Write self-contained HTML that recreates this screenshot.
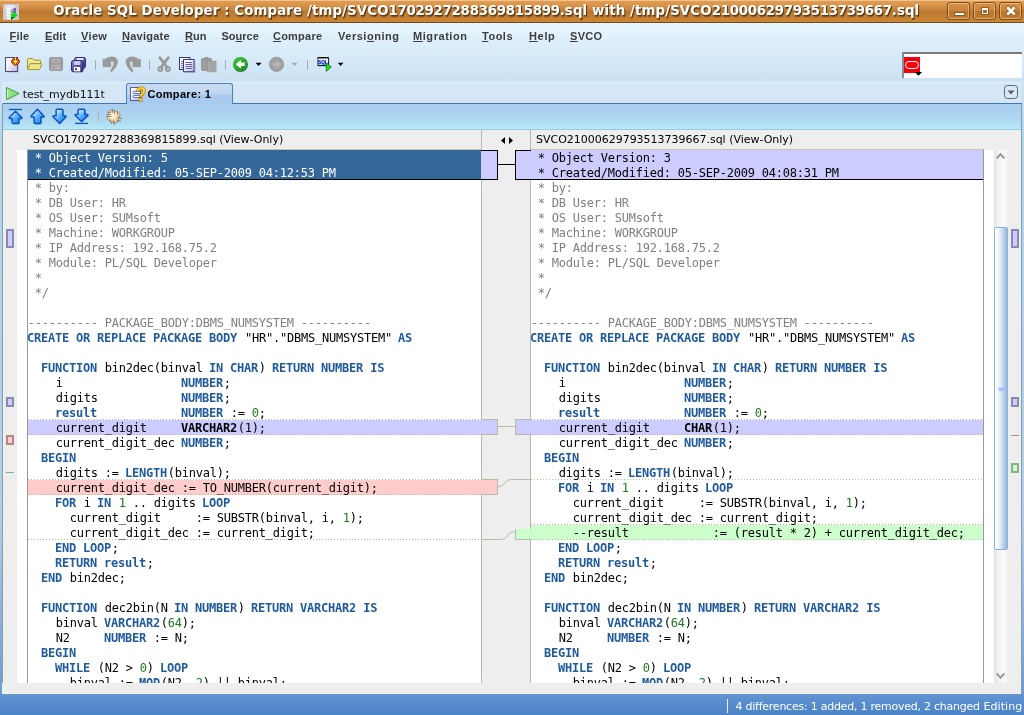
<!DOCTYPE html>
<html lang="en"><head><meta charset="utf-8"><title>Oracle SQL Developer : Compare</title>
<style>
html,body{margin:0;padding:0}
body{width:1024px;height:715px;overflow:hidden;position:relative;
 font:11px "DejaVu Sans","Liberation Sans",sans-serif;color:#000;
 background:linear-gradient(to bottom,#E7F5FD 23px,#CBE2F4 81px,#C6DFF3 103px,#ADD8F2 130px,#AAD0EE 520px,#699BD5 693px,#6295D1 694px,#4B83C7 715px)}
div,span,svg{position:absolute;box-sizing:border-box}
b,i,#ttext span{position:static}
#ttext span{letter-spacing:-0.27px}
/* ---------- title bar ---------- */
#title{left:0;top:0;width:1024px;height:23px;
 background:linear-gradient(to bottom,#F1C291 0,#F1C291 1px,#E39D50 1px,#DA944B 5px,#C6823B 10px,#B97832 11.5px,#BB7A31 13px,#CC8634 21.5px,#A86C2C 22px,#6E4A24 22px,#6E4A24 23px)}
#ttext{left:53.2px;top:2px;height:18px;line-height:18px;white-space:nowrap;
 font:bold 13.33px/18px "DejaVu Sans","Liberation Sans",sans-serif;color:#fff;letter-spacing:0.12px;
 text-shadow:1px 1px 0 #5a3a14,1px 2px 1px rgba(70,40,10,.6)}
.wb{top:2px;width:23px;height:18px;border:1px solid #7d4f1d;border-radius:3px;
 background:linear-gradient(to bottom,#D8914A 0,#C98239 50%,#B5752F 50%,#C27D2F 100%);
 box-shadow:inset 0 0 0 1px rgba(255,214,160,.55)}
/* ---------- menu ---------- */
.m{top:29px;height:14px;line-height:14px;white-space:nowrap;font:bold 11px/14px "Liberation Sans",sans-serif;color:#3c3c3c}
.m u{text-decoration:underline;text-underline-offset:1px}
/* ---------- tabs ---------- */
#strip{left:2px;top:82px;width:1020px;height:22px;border-radius:3px 3px 0 0;background:#D5E7F5;
 border-top:1px solid #E3F0FA;border-left:1px solid #E0EEF9;border-bottom:1px solid #3F74C6}
#atab{left:126px;top:83px;width:107px;height:21px;border:1px solid #4A7FCB;border-bottom:none;border-radius:3px 3px 0 0;
 background:linear-gradient(to bottom,#CADCF3 0,#BFD5F1 10px,#AACAEE 11px,#A7CAEE 21px)}
#ctool{left:2px;top:104px;width:1020px;height:26px;border-left:1px solid #8E9CAA;border-right:1px solid #8E9CAA;
 background:linear-gradient(to bottom,#AACEF0 0,#ADD5F0 13px,#B0DDF2 19px,#B6EAF7 25px,#9DC7E6 25px,#9DC7E6 26px)}
.t11{font:11px/14px "DejaVu Sans",sans-serif;white-space:nowrap;height:14px;letter-spacing:-0.015px}
/* ---------- main ---------- */
#main{left:2px;top:130px;width:1020px;height:564px;background:#EEEEEE;border-left:1px solid #999;border-right:1px solid #999}
.ed{top:150px;height:533px;background:#fff;overflow:hidden;
 font:12px/15px "DejaVu Sans Mono","Liberation Mono",monospace;letter-spacing:-0.224px;color:#000}
.ln{position:relative;left:-0.25px;top:1px;height:15px;white-space:pre}
.ln b{color:#1F5A9C;position:relative;left:-0.8px}
.ln i{color:#1E7A1E;font-style:normal}
.ln.c{color:#808080}
.ln.d b{color:#000}
.ln.s{color:#fff}
.band{left:0;width:100%;height:16px;background-repeat:repeat-x,repeat-x,no-repeat;background-size:3px 1px,3px 1px,100% 15px;background-position:0 0,0 15px,0 1px;
 background-image:linear-gradient(to right,#B9B9A4 1px,transparent 1px),linear-gradient(to right,#B9B9A4 1px,transparent 1px),linear-gradient(var(--c),var(--c))}
.dot{left:0;width:100%;height:1px;background:linear-gradient(to right,#B9B9A4 1px,transparent 1px) 0 0/3px 1px repeat-x}
.vl{width:1px;background:#B9B9A7}
.mk{width:8px;border:2px solid}
/* ---------- status ---------- */
#status{left:0;top:694px;width:1024px;height:21px;color:#fff}
</style></head>
<body>
<div id="all" style="left:0;top:0;width:1024px;height:715px;will-change:transform">

<!-- ======= title bar ======= -->
<div id="title">
 <svg style="left:3px;top:4px" width="16" height="16" viewBox="0 0 16 16">
  <defs><linearGradient id="gpur" x1="0" y1="0" x2="1" y2="0"><stop offset="0" stop-color="#D8D4EC"/><stop offset="1" stop-color="#4A4890"/></linearGradient>
  <linearGradient id="gcyl" x1="0" y1="0" x2="1" y2="0"><stop offset="0" stop-color="#D4D4D8"/><stop offset=".3" stop-color="#FFFFFF"/><stop offset=".75" stop-color="#E6E4F0"/><stop offset="1" stop-color="#CFCFD6"/></linearGradient></defs>
  <rect width="16" height="16" fill="#C8CACE"/>
  <path d="M1.8 2.4 C1.8 .6 12.6 .6 12.6 2.4 L11.2 14 C11 15.8 3.6 15.8 3.4 14Z" fill="url(#gcyl)"/>
  <ellipse cx="7.2" cy="2.5" rx="5.2" ry="1.5" fill="#E6E4F2"/>
  <path d="M7.6 5.2 L12.9 3.8 L12.7 9.4 L7.6 8.6Z" fill="url(#gpur)"/>
  <path d="M2.6 5.6 C4.4 7.2 7.4 7.2 8.4 6.6 M3 9 C4.6 10.6 7.4 10.6 8.4 10 M3.3 12.2 C4.8 13.6 7.4 13.6 8.4 13" stroke="#D2D2D8" stroke-width=".9" fill="none"/>
  <path d="M8 6.8 L14.8 11.3 L8 16Z" fill="#10D418"/>
  <path d="M8.6 8.2 L10.4 9.4 L8.6 10.4Z" fill="#B8FFB8"/>
  <path d="M8 13.4 L8 16 L12.2 13.1Z" fill="#0A5C24"/>
 </svg>
 <div id="ttext">Oracle SQL Developer : Compare /tmp/SVCO<span>1702927288369815899</span>.sql with /tmp/SVCO<span>21000629793513739667</span>.sql</div>
 <div class="wb" style="left:947px"><div style="left:6.6px;top:9.7px;width:9px;height:2.8px;background:#fff;box-shadow:0 0 0 1px rgba(110,70,25,.6)"></div></div>
 <div class="wb" style="left:973px"><div style="left:7.6px;top:4.8px;width:6.8px;height:6.6px;border:1.5px solid #fff;border-top-width:2.2px;box-shadow:0 0 0 1px rgba(110,70,25,.6);background:#A86A28"></div></div>
 <div class="wb" style="left:999px">
  <svg style="left:5px;top:2px" width="13" height="13" viewBox="0 0 13 13"><path d="M3.1 3.1 L8.9 8.7 M8.9 3.1 L3.1 8.7" stroke="#7a4d1c" stroke-width="4.4" stroke-linecap="square" opacity=".6"/><path d="M3.1 3.1 L8.9 8.7 M8.9 3.1 L3.1 8.7" stroke="#fff" stroke-width="2.6" stroke-linecap="square"/></svg>
 </div>
</div>

<!-- ======= menu bar ======= -->
<div class="m" style="left:9.5px;letter-spacing:0.2px"><u>F</u>ile</div>
<div class="m" style="left:45px;letter-spacing:0.1px"><u>E</u>dit</div>
<div class="m" style="left:81px;letter-spacing:0.35px"><u>V</u>iew</div>
<div class="m" style="left:122px;letter-spacing:0.25px"><u>N</u>avigate</div>
<div class="m" style="left:185px;letter-spacing:0.05px"><u>R</u>un</div>
<div class="m" style="left:221.5px;letter-spacing:0.0px">So<u>u</u>rce</div>
<div class="m" style="left:273px;letter-spacing:0.22px"><u>C</u>ompare</div>
<div class="m" style="left:338px;letter-spacing:0.52px">Versi<u>o</u>ning</div>
<div class="m" style="left:413px;letter-spacing:0.56px"><u>M</u>igration</div>
<div class="m" style="left:482px;letter-spacing:0.5px"><u>T</u>ools</div>
<div class="m" style="left:529px;letter-spacing:0.65px"><u>H</u>elp</div>
<div class="m" style="left:570px;letter-spacing:0.3px"><u>S</u>VCO</div>

<!-- ======= main toolbar ======= -->
<svg style="left:0;top:50px" width="360" height="30" viewBox="0 50 360 30">
 <defs>
  <linearGradient id="gdoc" x1="0" y1="0" x2="1" y2="1"><stop offset="0" stop-color="#fff"/><stop offset=".4" stop-color="#F2F0FA"/><stop offset="1" stop-color="#BCB8DE"/></linearGradient>
  <linearGradient id="gflp" x1="0" y1="0" x2="1" y2="1"><stop offset="0" stop-color="#8A8AD8"/><stop offset=".5" stop-color="#5856A6"/><stop offset="1" stop-color="#36347E"/></linearGradient>
  <radialGradient id="ggrn" cx=".42" cy=".38" r=".62"><stop offset="0" stop-color="#34C434"/><stop offset=".7" stop-color="#1CA41C"/><stop offset=".86" stop-color="#0E840E"/><stop offset="1" stop-color="#086408"/></radialGradient>
  <linearGradient id="gsql" x1="0" y1="0" x2="0" y2="1"><stop offset="0" stop-color="#fff"/><stop offset=".55" stop-color="#E6FFFF"/><stop offset="1" stop-color="#6EEAEA"/></linearGradient>
 </defs>
 <!-- new -->
 <rect x="6.5" y="58.5" width="12" height="14" fill="#8A96A8" opacity=".55"/>
 <rect x="5.5" y="57.5" width="12" height="14" fill="url(#gdoc)" stroke="#4A4888" stroke-width="1"/>
 <path d="M15.5 56.9 L17.6 58.2 L19 59.4 L20.1 61.5 L19 63.6 L17.6 64.8 L15.5 66.1 L13.4 64.8 L12 63.6 L10.9 61.5 L12 59.4 L13.4 58.2Z" fill="#A92A04"/>
 <path d="M15.5 57.6 L16.3 60.7 L19.4 61.5 L16.3 62.3 L15.5 65.4 L14.7 62.3 L11.6 61.5 L14.7 60.7Z" fill="#FFE21E"/>
 <path d="M15.5 57.4 V59.2" stroke="#FFFBE0" stroke-width="1"/>
 <circle cx="15.5" cy="61.5" r="1.5" fill="#FFEC3A"/>
 <g fill="#F6C21A"><circle cx="13.5" cy="59.5" r=".6"/><circle cx="17.5" cy="59.5" r=".6"/><circle cx="13.5" cy="63.5" r=".6"/><circle cx="17.5" cy="63.5" r=".6"/></g>
 <!-- open -->
 <path d="M27.6 59.2 Q27.6 58.4 28.4 58.4 L32.6 58.4 L34.2 60.2 L39.8 60.2 Q40.6 60.2 40.6 61 L40.6 63.5 L27.6 69.2Z" fill="#EFEC9C" stroke="#A8921E" stroke-width="1"/>
 <path d="M30.2 63.6 L41.2 63.6 Q42 63.6 41.7 64.4 L39.9 69 Q39.6 69.6 38.8 69.6 L28.4 69.6 Q27.4 69.6 27.8 68.8Z" fill="#E9E58C" stroke="#A8921E" stroke-width="1"/>
 <!-- save (disabled) -->
 <rect x="49.5" y="57.5" width="13" height="13" rx="1.6" fill="#A2A2A2" stroke="#979797"/>
 <rect x="52" y="58" width="8" height="5" rx="1" fill="#ABABAB"/>
 <rect x="52" y="65" width="8" height="5" fill="#B2B2B2"/>
 <rect x="53.3" y="66" width="1.5" height="3" fill="#999"/>
 <!-- save all -->
 <rect x="74.6" y="57.5" width="10.8" height="10.6" rx="1.6" fill="url(#gflp)" stroke="#2E2C74"/>
 <rect x="76.8" y="58" width="6.6" height="2.4" fill="#E4E4FA"/>
 <rect x="72.6" y="61.6" width="11" height="11" rx="1.6" fill="#556" opacity=".35"/>
 <rect x="71.5" y="60.5" width="11.5" height="11.2" rx="1.8" fill="url(#gflp)" stroke="#2E2C74"/>
 <rect x="74" y="61" width="6.4" height="4" rx=".8" fill="#C9C9F2"/>
 <rect x="74" y="67" width="6.2" height="4.4" fill="#fff"/>
 <rect x="75.2" y="68" width="1.6" height="2.2" fill="#26246A"/>
 <!-- separators -->
 <path d="M95.5 60 V70 M149.5 60 V70 M225.5 60 V70 M307.5 60 V70" stroke="#A9ABAE" stroke-width="1"/>
 <!-- undo -->
 <path id="undo" d="M103 59.2 L105.4 59.2 C106.8 57.6 109.6 56.8 112.6 57 C116.4 57.3 118 60 117.3 63.2 C116.5 66.8 114 69.6 111.4 71.9 L110.4 70.6 C112.4 68 114.2 64.8 113.8 62.6 C113.4 60.9 111.6 60.9 110.2 62 L110.7 62.8 L110.7 66.8 L103 66.8Z" fill="#9A9A9A" stroke="#939393" stroke-width=".6"/>
 <use href="#undo" transform="translate(243.5 0) scale(-1 1)"/>
 <!-- cut -->
 <g fill="none" stroke="#9A9A9A">
  <path d="M159.8 57.6 L167.2 67.4 M168.4 57.6 L161 67.4" stroke-width="2.7" stroke-linecap="round"/>
  <circle cx="160.3" cy="69" r="2" stroke-width="2"/><circle cx="167.9" cy="69" r="2" stroke-width="2"/>
 </g>
 <!-- copy -->
 <rect x="179.5" y="57.5" width="10.5" height="12" fill="url(#gdoc)" stroke="#3E3C7E"/>
 <path d="M181 61.5 H184 M181 63.5 H184 M181 65.5 H184 M181 67.5 H184" stroke="#7A78B8" stroke-width="1"/>
 <rect x="184.5" y="60.5" width="11" height="12.4" fill="#667" opacity=".3"/>
 <rect x="183.5" y="59.5" width="10.5" height="12.2" fill="url(#gdoc)" stroke="#3E3C7E"/>
 <path d="M185.4 62.5 H192.2 M185.4 64.5 H192.2 M185.4 66.5 H192.2 M185.4 68.5 H192.2" stroke="#605EAA" stroke-width="1"/>
 <!-- paste (disabled) -->
 <rect x="201.5" y="58.5" width="10.2" height="12" rx="1.2" fill="#9E9E9E" stroke="#959595"/>
 <rect x="204.6" y="57" width="4" height="2.4" rx="1" fill="#999"/>
 <rect x="207.6" y="61.2" width="8.4" height="10.6" fill="#ABABAB" stroke="#979797" stroke-width=".8"/>
 <path d="M209.2 63.5 H214.4 M209.2 65.5 H214.4 M209.2 67.5 H214.4 M209.2 69.5 H214.4" stroke="#9A9A9A" stroke-width=".9"/>
 <!-- back -->
 <circle cx="240.9" cy="64.9" r="7.4" fill="#456" opacity=".25"/>
 <circle cx="240.4" cy="64.3" r="7.4" fill="url(#ggrn)"/>
 <circle cx="240.4" cy="64.3" r="6.1" fill="none" stroke="#5ED85E" stroke-width=".9" opacity=".55"/>
 <path d="M235.7 64.3 L240.9 59.8 L240.9 62.5 L244.6 62.5 L244.6 66.1 L240.9 66.1 L240.9 68.8Z" fill="#fff"/>
 <path d="M255.5 62.8 H261.6 L258.55 66.1Z" fill="#000"/>
 <!-- forward (disabled) -->
 <circle cx="276.5" cy="64.3" r="7.4" fill="#A1A1A1"/>
 <circle cx="276.5" cy="64.3" r="7" fill="none" stroke="#979797" stroke-width=".8"/>
 <path d="M281.4 64.3 L276.4 59.8 L276.4 62.5 L272.8 62.5 L272.8 66.1 L276.4 66.1 L276.4 68.8Z" fill="#B6B6B6"/>
 <path d="M291.8 62.8 H297.4 L294.6 65.9Z" fill="#A9A3A3"/>
 <!-- run sql -->
 <rect x="318.4" y="58.2" width="11" height="8.4" fill="#555" opacity=".45"/>
 <rect x="317.5" y="57" width="11.3" height="9" fill="#111"/>
 <rect x="318.3" y="58.5" width="9.7" height="6.6" fill="url(#gsql)"/>
 <text x="318.1" y="63.6" font-family="Liberation Sans,sans-serif" font-weight="bold" font-size="5.9" fill="#1212C4" stroke="#1212C4" stroke-width=".25" textLength="9.4" lengthAdjust="spacingAndGlyphs">SQL</text>
 <path d="M326.2 62.8 L331.4 67.1 L326.2 71.4Z" fill="#14E414" stroke="#0E6A16" stroke-width=".7" stroke-linejoin="round"/>
 <path d="M337.8 62.8 H343.4 L340.6 66.1Z" fill="#000"/>
</svg>
<!-- search box -->
<div style="left:902px;top:52px;width:120px;height:26px;background:#fff;border-top:2px solid #7C7C7C;border-left:2px solid #8A8E90"></div>
<div style="left:904px;top:57px;width:16px;height:16px;background:#F8000A"></div>
<div style="left:905.4px;top:60.6px;width:13.2px;height:8.7px;border:1.8px solid #fff;border-radius:4.35px"></div>
<svg style="left:914px;top:71px" width="9" height="6" viewBox="0 0 9 6"><path d="M.8 1 H8.2 L4.5 4.8Z" fill="#000"/></svg>


<!-- ======= tab strip ======= -->
<div id="strip"></div>
<div id="atab"></div>
<svg style="left:4px;top:85px" width="18" height="17" viewBox="4 85 18 17">
 <defs><linearGradient id="gtri" x1="0" y1="0" x2="1" y2="0"><stop offset="0" stop-color="#9AE48A"/><stop offset="1" stop-color="#84DC78"/></linearGradient></defs>
 <path d="M7.2 88.2 L18.6 93.6 L7.2 99.4Z" fill="#7A8" opacity=".35" transform="translate(.7 .7)"/>
 <path d="M6.6 87.5 L19.2 93.4 L6.6 99.6Z" fill="url(#gtri)" stroke="#3FA03F" stroke-width="1" stroke-linejoin="round"/>
 <path d="M7.6 89.2 V98" stroke="#E6FAE0" stroke-width=".9"/>
</svg>
<div class="t11" style="left:22.8px;top:87.6px;letter-spacing:-0.1px;color:#111">test_mydb111t</div>
<svg style="left:129px;top:85px" width="19" height="18" viewBox="129 85 19 18">
 <rect x="131.3" y="88.3" width="10" height="13" fill="#778" opacity=".3"/>
 <rect x="130.5" y="87.5" width="10" height="13" fill="url(#gdoc)" stroke="#5E5A9A"/>
 <rect x="133" y="91.3" width="7.4" height="2.2" rx="1.1" fill="#fff" stroke="#2A66D8" stroke-width=".9"/>
 <rect x="133" y="95.4" width="7.4" height="2.2" rx="1.1" fill="#fff" stroke="#2A66D8" stroke-width=".9"/>
 <text x="136.1" y="101.2" font-family="Liberation Sans,sans-serif" font-weight="bold" font-size="19.5" fill="#FFD21A" stroke="#9C5A12" stroke-width="1.2" paint-order="stroke" textLength="10.2" lengthAdjust="spacingAndGlyphs">?</text>
</svg>
<div style="left:147.4px;top:87px;height:14px;white-space:nowrap;font:bold 11px/14px 'Liberation Sans',sans-serif;letter-spacing:.34px">Compare: 1</div>
<div style="left:1004px;top:85px;width:14px;height:14px;border:1.3px solid #5C656D;border-radius:3.5px;background:#D9E9F6"></div>
<svg style="left:1007px;top:90px" width="8" height="5" viewBox="0 0 8 5"><path d="M.4 .6 H7.6 L4 4.4Z" fill="#596168"/></svg>


<!-- ======= compare toolbar ======= -->
<div id="ctool"></div>
<svg style="left:4px;top:106px" width="124" height="22" viewBox="4 106 124 22">
 <defs>
  <linearGradient id="garr" x1="0" y1="0" x2="1" y2="1"><stop offset="0" stop-color="#FFFFFF"/><stop offset=".25" stop-color="#BCE2FE"/><stop offset=".5" stop-color="#5CB0F8"/><stop offset="1" stop-color="#1272E4"/></linearGradient>
  <radialGradient id="gblob" cx=".4" cy=".4" r=".7"><stop offset="0" stop-color="#FFF4DC"/><stop offset=".6" stop-color="#F8DCAC"/><stop offset="1" stop-color="#EEC686"/></radialGradient>
 </defs>
 <!-- first -->
 <path d="M9 109.5 H22" stroke="#0A54C0" stroke-width="1.3"/>
 <path d="M15.5 111.2 L21.8 117.4 Q22.2 118.4 21.2 118.4 L18.9 118.4 L18.9 122.4 Q18.9 123.4 17.9 123.4 L13.1 123.4 Q12.1 123.4 12.1 122.4 L12.1 118.4 L9.8 118.4 Q8.8 118.4 9.2 117.4Z" fill="#1C4C8C" opacity=".32" transform="translate(.9 .9)"/>
 <path id="aup1" d="M15.5 111.2 L21.8 117.4 Q22.2 118.4 21.2 118.4 L18.9 118.4 L18.9 122.4 Q18.9 123.4 17.9 123.4 L13.1 123.4 Q12.1 123.4 12.1 122.4 L12.1 118.4 L9.8 118.4 Q8.8 118.4 9.2 117.4Z" fill="url(#garr)" stroke="#0A54C0" stroke-width="1.45" stroke-linejoin="round"/>
 <!-- previous -->
 <path d="M37.5 109.3 L43.9 116 Q44.3 117 43.3 117 L40.9 117 L40.9 122.5 Q40.9 123.5 39.9 123.5 L35.1 123.5 Q34.1 123.5 34.1 122.5 L34.1 117 L31.7 117 Q30.7 117 31.1 116Z" fill="#1C4C8C" opacity=".32" transform="translate(.9 .9)"/>
 <path id="aup2" d="M37.5 109.3 L43.9 116 Q44.3 117 43.3 117 L40.9 117 L40.9 122.5 Q40.9 123.5 39.9 123.5 L35.1 123.5 Q34.1 123.5 34.1 122.5 L34.1 117 L31.7 117 Q30.7 117 31.1 116Z" fill="url(#garr)" stroke="#0A54C0" stroke-width="1.45" stroke-linejoin="round"/>
 <!-- next -->
 <path d="M59.5 123.5 L65.9 116.8 Q66.3 115.8 65.3 115.8 L62.9 115.8 L62.9 110.3 Q62.9 109.3 61.9 109.3 L57.1 109.3 Q56.1 109.3 56.1 110.3 L56.1 115.8 L53.7 115.8 Q52.7 115.8 53.1 116.8Z" fill="#1C4C8C" opacity=".32" transform="translate(.9 .9)"/>
 <path d="M59.5 123.5 L65.9 116.8 Q66.3 115.8 65.3 115.8 L62.9 115.8 L62.9 110.3 Q62.9 109.3 61.9 109.3 L57.1 109.3 Q56.1 109.3 56.1 110.3 L56.1 115.8 L53.7 115.8 Q52.7 115.8 53.1 116.8Z" fill="url(#garr)" stroke="#0A54C0" stroke-width="1.45" stroke-linejoin="round"/>
 <!-- last -->
 <path d="M81.5 121.6 L87.8 115.4 Q88.2 114.4 87.2 114.4 L84.9 114.4 L84.9 110.3 Q84.9 109.3 83.9 109.3 L79.1 109.3 Q78.1 109.3 78.1 110.3 L78.1 114.4 L75.8 114.4 Q74.8 114.4 75.2 115.4Z" fill="#1C4C8C" opacity=".32" transform="translate(.9 .9)"/>
 <path d="M81.5 121.6 L87.8 115.4 Q88.2 114.4 87.2 114.4 L84.9 114.4 L84.9 110.3 Q84.9 109.3 83.9 109.3 L79.1 109.3 Q78.1 109.3 78.1 110.3 L78.1 114.4 L75.8 114.4 Q74.8 114.4 75.2 115.4Z" fill="url(#garr)" stroke="#0A54C0" stroke-width="1.45" stroke-linejoin="round"/>
 <path d="M75 123.4 H88" stroke="#0A54C0" stroke-width="1.3"/>
 <path d="M98.5 112 V122" stroke="#BDB0A8" stroke-width="1"/>
 <!-- patch -->
 <path d="M109.4 110.6 L112 110.2 L115.4 111 L118.6 112.2 L119.8 113.6 L119.8 115.8 L118.6 117.6 L118.2 120 L117 122.4 L113.2 122.6 L111.6 121.4 L109.6 120.6 L107.5 119.6 L107.3 116 L108.3 113Z" fill="#6A5A40" opacity=".35" transform="translate(.6 .7)"/>
 <path d="M109.4 110.6 L112 110.2 L115.4 111 L118.6 112.2 L119.8 113.6 L119.8 115.8 L118.6 117.6 L118.2 120 L117 122.4 L113.2 122.6 L111.6 121.4 L109.6 120.6 L107.5 119.6 L107.3 116 L108.3 113Z" fill="url(#gblob)" stroke="#B98A3C" stroke-width=".8" stroke-linejoin="round"/>
 <path d="M112.4 109.2 V112.4 M114.4 110.2 V113.6 M117.5 111.2 V114.6 M108 112.3 H110.6 M107.1 114.5 H110.6 M107.1 116.5 H110.6 M109.6 119.4 L111.6 123.6 M113.4 120 L114.4 124.6 M117.4 117.3 L121.6 118.6 M116.6 120 L120.6 121.4" stroke="#74747C" stroke-width=".9" stroke-linecap="round"/>
</svg>


<!-- ======= main area ======= -->
<div id="main"></div>
<div style="left:2px;top:683px;width:1px;height:11px;background:#F4F2EF"></div>
<div style="left:2px;top:693px;width:1019px;height:1px;background:#F4F2EF"></div>
<div class="t11" style="left:33px;top:133px">SVCO1702927288369815899.sql (View-Only)</div>
<div class="t11" style="left:536px;top:133px">SVCO21000629793513739667.sql (View-Only)</div>
<svg style="left:500px;top:136px" width="14" height="9" viewBox="0 0 14 9"><path d="M1 4.5 L5 1 L5 8Z M13 4.5 L9 1 L9 8Z" fill="#000"/></svg>

<!-- left gutter -->
<div style="left:17px;top:150px;width:10px;height:533px;background:#fff"></div>
<div style="left:27px;top:150px;width:1px;height:533px;background:#999"></div>
<div class="mk" style="left:6px;top:229px;height:19px;border-color:#8888B0;background:#CCCCFF"></div>
<div class="mk" style="left:6px;top:397px;height:10px;border-color:#8888B0;background:#CCCCFF"></div>
<div class="mk" style="left:6px;top:435px;height:10px;border-color:#B08888;background:#FFCCCC"></div>
<div style="left:6px;top:472px;width:8px;height:1px;background:#88B088"></div>

<!-- left editor -->
<div style="left:27px;top:149px;width:455px;height:1px;background:#C4C4B0"></div>
<div style="left:530px;top:149px;width:454px;height:1px;background:#C4C4B0"></div>
<div class="ed" style="left:28px;width:453px">
 <div style="left:-1px;top:0;width:454px;height:30px;background:#336699;border-bottom:1px solid #000"></div>
 <div class="band" style="top:269px;--c:#CCCCFF"></div>
 <div class="band" style="top:329px;--c:#FFCCCC"></div>
 <div class="dot" style="top:389px"></div>
<div class="ln s"> * Object Version: 5</div>
<div class="ln s"> * Created/Modified: 05-SEP-2009 04:12:53 PM</div>
<div class="ln c"> * by:</div>
<div class="ln c"> * DB User: HR</div>
<div class="ln c"> * OS User: SUMsoft</div>
<div class="ln c"> * Machine: WORKGROUP</div>
<div class="ln c"> * IP Address: 192.168.75.2</div>
<div class="ln c"> * Module: PL/SQL Developer</div>
<div class="ln c"> *</div>
<div class="ln c"> */</div>
<div class="ln"></div>
<div class="ln c">---------- PACKAGE_BODY:DBMS_NUMSYSTEM ----------</div>
<div class="ln"><b>CREATE</b> <b>OR</b> <b>REPLACE</b> <b>PACKAGE</b> <b>BODY</b> &quot;HR&quot;.&quot;DBMS_NUMSYSTEM&quot; <b>AS</b></div>
<div class="ln"></div>
<div class="ln">  <b>FUNCTION</b> bin2dec(binval <b>IN</b> <b>CHAR</b>) <b>RETURN</b> <b>NUMBER</b> <b>IS</b></div>
<div class="ln">    i                 <b>NUMBER</b>;</div>
<div class="ln">    digits            <b>NUMBER</b>;</div>
<div class="ln">    <b>result</b>            <b>NUMBER</b> := <i>0</i>;</div>
<div class="ln d">    current_digit     <b>VARCHAR2</b>(1);</div>
<div class="ln">    current_digit_dec <b>NUMBER</b>;</div>
<div class="ln">  <b>BEGIN</b></div>
<div class="ln">    digits := <b>LENGTH</b>(binval);</div>
<div class="ln d">    current_digit_dec := TO_NUMBER(current_digit);</div>
<div class="ln">    <b>FOR</b> i <b>IN</b> <i>1</i> .. digits <b>LOOP</b></div>
<div class="ln">      current_digit     := SUBSTR(binval, i, <i>1</i>);</div>
<div class="ln">      current_digit_dec := current_digit;</div>
<div class="ln">    <b>END</b> <b>LOOP</b>;</div>
<div class="ln">    <b>RETURN</b> <b>result</b>;</div>
<div class="ln">  <b>END</b> bin2dec;</div>
<div class="ln"></div>
<div class="ln">  <b>FUNCTION</b> dec2bin(N <b>IN</b> <b>NUMBER</b>) <b>RETURN</b> <b>VARCHAR2</b> <b>IS</b></div>
<div class="ln">    binval <b>VARCHAR2</b>(<i>64</i>);</div>
<div class="ln">    N2     <b>NUMBER</b> := N;</div>
<div class="ln">  <b>BEGIN</b></div>
<div class="ln">    <b>WHILE</b> (N2 &gt; <i>0</i>) <b>LOOP</b></div>
<div class="ln">      binval := <b>MOD</b>(N2, <i>2</i>) || binval;</div>
</div>

<!-- centre connector column -->
<div class="vl" style="left:481px;top:130px;height:553px"></div>
<div class="vl" style="left:530px;top:130px;height:553px"></div>
<!-- selected block boxes -->
<div style="left:481px;top:150px;width:17px;height:30px;background:#CCCCFF;border:1px solid #000;border-left:none"></div>
<div style="left:515px;top:150px;width:16px;height:30px;background:#CCCCFF;border:1px solid #000;border-right:none"></div>
<div style="left:498px;top:164px;width:17px;height:1px;background:#000"></div>
<!-- changed block -->
<div style="left:482px;top:419px;width:16px;height:16px;background:#CCCCFF;border:1px solid #B9B9A7;border-left:none"></div>
<div style="left:515px;top:419px;width:16px;height:16px;background:#CCCCFF;border:1px solid #B9B9A7;border-right:none"></div>
<div style="left:498px;top:426px;width:17px;height:1px;background:#B9B9A7"></div>
<div style="left:481px;top:420px;width:1px;height:14px;background:#CCCCFF"></div>
<div style="left:530px;top:420px;width:1px;height:14px;background:#CCCCFF"></div>
<!-- removed block -->
<div style="left:482px;top:479px;width:16px;height:16px;background:#FFCCCC;border:1px solid #B9B9A7;border-left:none"></div>
<div style="left:481px;top:480px;width:1px;height:14px;background:#FFCCCC"></div>
<!-- added block -->
<div style="left:515px;top:529px;width:16px;height:11px;background:#CCFFCC;border-left:1px solid #B9B9A7;border-bottom:1px solid #B9B9A7"></div>
<svg style="left:482px;top:470px" width="49" height="80" viewBox="482 470 49 80" fill="none" stroke="#B9B9A7" stroke-width="1">
 <path d="M498 486.5 C506 486.5 503.5 479.5 512 479.5 L530.5 479.5"/>
 <path d="M515 531.5 C506.5 531.5 509 539.5 500 539.5 L482 539.5"/>
</svg>


<!-- right editor -->
<div class="ed" style="left:531px;width:452px">
 <div style="left:-1px;top:0;width:454px;height:30px;background:#CCCCFF;border-bottom:1px solid #000"></div>
 <div class="band" style="top:269px;--c:#CCCCFF"></div>
 <div class="dot" style="top:329px"></div>
 <div class="band" style="top:374px;--c:#CCFFCC"></div>
<div class="ln d"> * Object Version: 3</div>
<div class="ln d"> * Created/Modified: 05-SEP-2009 04:08:31 PM</div>
<div class="ln c"> * by:</div>
<div class="ln c"> * DB User: HR</div>
<div class="ln c"> * OS User: SUMsoft</div>
<div class="ln c"> * Machine: WORKGROUP</div>
<div class="ln c"> * IP Address: 192.168.75.2</div>
<div class="ln c"> * Module: PL/SQL Developer</div>
<div class="ln c"> *</div>
<div class="ln c"> */</div>
<div class="ln"></div>
<div class="ln c">---------- PACKAGE_BODY:DBMS_NUMSYSTEM ----------</div>
<div class="ln"><b>CREATE</b> <b>OR</b> <b>REPLACE</b> <b>PACKAGE</b> <b>BODY</b> &quot;HR&quot;.&quot;DBMS_NUMSYSTEM&quot; <b>AS</b></div>
<div class="ln"></div>
<div class="ln">  <b>FUNCTION</b> bin2dec(binval <b>IN</b> <b>CHAR</b>) <b>RETURN</b> <b>NUMBER</b> <b>IS</b></div>
<div class="ln">    i                 <b>NUMBER</b>;</div>
<div class="ln">    digits            <b>NUMBER</b>;</div>
<div class="ln">    <b>result</b>            <b>NUMBER</b> := <i>0</i>;</div>
<div class="ln d">    current_digit     <b>CHAR</b>(1);</div>
<div class="ln">    current_digit_dec <b>NUMBER</b>;</div>
<div class="ln">  <b>BEGIN</b></div>
<div class="ln">    digits := <b>LENGTH</b>(binval);</div>
<div class="ln">    <b>FOR</b> i <b>IN</b> <i>1</i> .. digits <b>LOOP</b></div>
<div class="ln">      current_digit     := SUBSTR(binval, i, <i>1</i>);</div>
<div class="ln">      current_digit_dec := current_digit;</div>
<div class="ln d">      --result            := (result * 2) + current_digit_dec;</div>
<div class="ln">    <b>END</b> <b>LOOP</b>;</div>
<div class="ln">    <b>RETURN</b> <b>result</b>;</div>
<div class="ln">  <b>END</b> bin2dec;</div>
<div class="ln"></div>
<div class="ln">  <b>FUNCTION</b> dec2bin(N <b>IN</b> <b>NUMBER</b>) <b>RETURN</b> <b>VARCHAR2</b> <b>IS</b></div>
<div class="ln">    binval <b>VARCHAR2</b>(<i>64</i>);</div>
<div class="ln">    N2     <b>NUMBER</b> := N;</div>
<div class="ln">  <b>BEGIN</b></div>
<div class="ln">    <b>WHILE</b> (N2 &gt; <i>0</i>) <b>LOOP</b></div>
<div class="ln">      binval := <b>MOD</b>(N2, <i>2</i>) || binval;</div>
</div>
<div style="left:983px;top:150px;width:1px;height:533px;background:#999"></div>
<div style="left:984px;top:150px;width:10px;height:533px;background:#fff"></div>

<!-- scrollbar -->
<div style="left:994px;top:150px;width:13px;height:533px;background:linear-gradient(to right,#E3E3E3 0,#F1F1F1 4px,#FAFAFA 9px,#F4F4F4 13px)"></div>
<svg style="left:995px;top:152px" width="11" height="9" viewBox="0 0 11 9"><path d="M1.6 6.4 L5.5 2.2 L9.4 6.4" fill="none" stroke="#9A9A9A" stroke-width="2.1"/></svg>
<svg style="left:995px;top:671.4px" width="11" height="9" viewBox="0 0 11 9"><path d="M1.6 2.4 L5.5 6.6 L9.4 2.4" fill="none" stroke="#9A9A9A" stroke-width="2.1"/></svg>
<div style="left:994px;top:227px;width:14px;height:323px;border:1px solid #8DB0DA;border-radius:2px;background:linear-gradient(to right,#fff 0,#fff 1px,#E3ECF6 5px,#A9C5E2 10px,#9BBADE 12px)"></div>
<div style="left:998px;top:385px;width:6px;height:6px;border-radius:3px;background:linear-gradient(160deg,#F2F7FF 15%,#86AEFF 80%)"></div>


<!-- right markers -->
<div class="mk" style="left:1011px;top:229px;height:19px;border-color:#8888B0;background:#CCCCFF"></div>
<div class="mk" style="left:1011px;top:397px;height:10px;border-color:#8888B0;background:#CCCCFF"></div>
<div style="left:1011px;top:435px;width:8px;height:1px;background:#B08888"></div>
<div class="mk" style="left:1011px;top:463px;height:10px;border-color:#88B088;background:#CCFFCC"></div>

<!-- ======= status bar ======= -->
<div id="status">
 <div style="left:727px;top:5px;width:1px;height:14px;background:#E8F0FA"></div>
 <div class="t11" style="left:735.5px;top:5.8px;color:#fff;letter-spacing:-0.245px">4 differences: 1 added, 1 removed, 2 changed</div>
 <div class="t11" style="left:983.5px;top:5.8px;color:#fff;letter-spacing:0.06px">Editing</div>
</div>
</div>
</body></html>
